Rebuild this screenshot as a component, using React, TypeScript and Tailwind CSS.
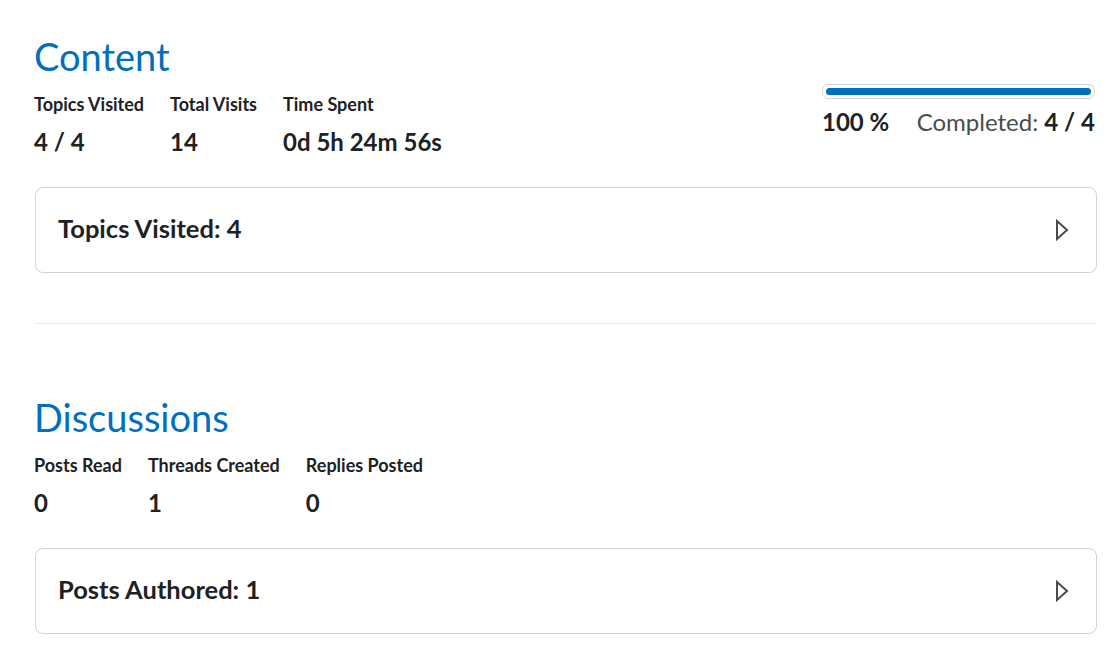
import React from "react";

type Stat = { label: string; value: string };

const contentStats: Stat[] = [
    { label: "Topics Visited", value: "4 / 4" },
    { label: "Total Visits", value: "14" },
    { label: "Time Spent", value: "0d 5h 24m 56s" },
];

const discussionStats: Stat[] = [
    { label: "Posts Read", value: "0" },
    { label: "Threads Created", value: "1" },
    { label: "Replies Posted", value: "0" },
];

function Stats({ items }: { items: Stat[] }) {
    return (
        <div className="flex gap-[26px]">
            {items.map((s) => (
                <div key={s.label} className="flex flex-col">
                    <span className="text-[18px] font-bold leading-[24px] text-[#202122]">{s.label}</span>
                    <span className="mt-[12px] text-[24px] font-bold leading-[28px] text-[#202122]">{s.value}</span>
                </div>
            ))}
        </div>
    );
}

function Caret() {
    return (
        <svg width="14" height="22" viewBox="0 0 14 22" fill="none">
            <path d="M2 2 L12 11 L2 20 Z" stroke="#494c4e" strokeWidth="2" strokeLinejoin="miter" />
        </svg>
    );
}

function Panel({ title }: { title: string }) {
    return (
        <div className="mt-[31px] flex h-[86px] items-center justify-between rounded-[8px] border border-[#cdd5dc] pl-[22px] pr-[27px]">
            <span className="pb-[3px] text-[25.5px] font-bold text-[#202122]">{title}</span>
            <Caret />
        </div>
    );
}

export default function App() {
    return (
        <div className="min-h-screen bg-white pl-[35px] pr-[15px] pt-[34px] font-['Lato',sans-serif] text-[#202122]">
            <section>
                <div className="flex items-start justify-between">
                    <div>
                        <h1 className="-ml-px text-[38px] leading-[44px] text-[#006fbf]">Content</h1>
                        <div className="-ml-px mt-[14px]">
                            <Stats items={contentStats} />
                        </div>
                    </div>
                    <div className="mr-[2px] mt-[50px] flex w-[273px] flex-col">
                        <div className="h-[15px] w-full rounded-[6px] border border-[#cdd5dc] p-[3px]">
                            <div className="h-full w-full rounded-full bg-[#006fbf]" />
                        </div>
                        <div className="mt-[8px] flex items-baseline justify-between text-[24px] leading-[30px]">
                            <span className="font-bold">100 %</span>
                            <span className="text-[#494c4e]">
                                Completed: <span className="font-bold text-[#202122]">4 / 4</span>
                            </span>
                        </div>
                    </div>
                </div>
                <Panel title="Topics Visited: 4" />
            </section>

            <hr className="mt-[50px] border-0 border-t border-[#e3e9f1]" />

            <section className="mt-[71px]">
                <h1 className="-ml-px text-[38px] leading-[44px] text-[#006fbf]">Discussions</h1>
                <div className="-ml-px mt-[14px]">
                    <Stats items={discussionStats} />
                </div>
                <Panel title="Posts Authored: 1" />
            </section>
        </div>
    );
}
